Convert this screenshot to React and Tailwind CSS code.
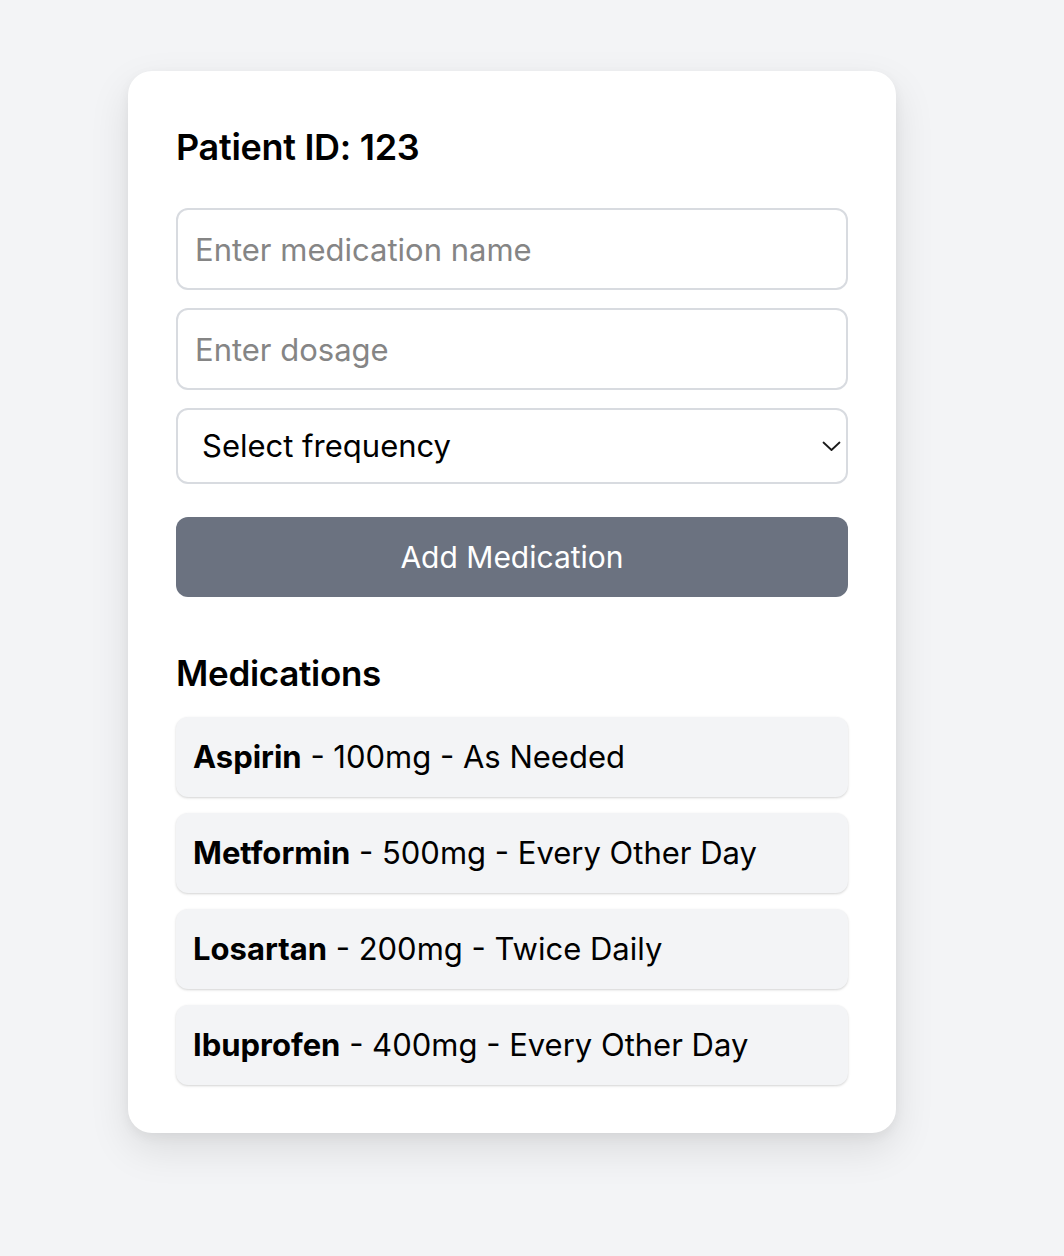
import React from "react";

const meds = [
  { name: "Aspirin", dose: "100mg", freq: "As Needed" },
  { name: "Metformin", dose: "500mg", freq: "Every Other Day" },
  { name: "Losartan", dose: "200mg", freq: "Twice Daily" },
  { name: "Ibuprofen", dose: "400mg", freq: "Every Other Day" },
];

export default function App() {
  return (
    <div className="min-h-[1256px] w-full bg-[#f3f4f6] pt-[71px] pl-[128px] font-['Inter','Liberation_Sans',sans-serif] text-black">
      <div className="w-[768px] rounded-[24px] bg-white p-[48px] shadow-[0_16px_40px_rgba(0,0,0,0.10),0_4px_12px_rgba(0,0,0,0.05)]">
        <h1 className="h-[56px] text-[36px] leading-[56px] font-semibold tracking-[-0.3px]">Patient ID: 123</h1>

        <div className="mt-[33px] flex flex-col gap-[18px]">
          <input
            type="text"
            placeholder="Enter medication name"
            className="h-[82px] w-full rounded-[12px] border-2 border-[#d8dbe0] bg-white px-[17px] text-[31px] outline-none placeholder:text-[#858585]"
          />
          <input
            type="text"
            placeholder="Enter dosage"
            className="h-[82px] w-full rounded-[12px] border-2 border-[#d8dbe0] bg-white px-[17px] text-[31px] outline-none placeholder:text-[#858585]"
          />
          <div className="relative">
            <select
              defaultValue=""
              className="h-[76px] w-full appearance-none rounded-[12px] border-2 border-[#d8dbe0] bg-white pl-[24px] text-[31px] text-black outline-none"
            >
              <option value="">Select frequency</option>
              <option>Once Daily</option>
              <option>Twice Daily</option>
              <option>Every Other Day</option>
              <option>As Needed</option>
            </select>
            <svg
              className="pointer-events-none absolute right-[7px] top-[33px]"
              width="19"
              height="11"
              viewBox="0 0 19 11"
              fill="none"
            >
              <path d="M1.5 1.5 L9.5 9 L17.5 1.5" stroke="#1a1a1a" strokeWidth="1.8" strokeLinecap="round" strokeLinejoin="round" />
            </svg>
          </div>
        </div>

        <button className="mt-[33px] h-[80px] w-full rounded-[12px] bg-[#6b7280] text-[30px] text-white">
          Add Medication
        </button>

        <h2 className="mt-[48px] h-[56px] text-[35px] leading-[56px] font-semibold tracking-[-0.3px]">Medications</h2>

        <ul className="mt-[16px] flex flex-col gap-[16px]">
          {meds.map((m) => (
            <li
              key={m.name}
              className="flex h-[80px] items-center rounded-[12px] bg-[#f3f4f6] px-[17px] text-[31px] shadow-[0_1px_3px_rgba(0,0,0,0.12),0_1px_2px_rgba(0,0,0,0.06)]"
            >
              <span className="font-bold">{m.name}</span>
              <span>&nbsp;- {m.dose} - {m.freq}</span>
            </li>
          ))}
        </ul>
      </div>
    </div>
  );
}
